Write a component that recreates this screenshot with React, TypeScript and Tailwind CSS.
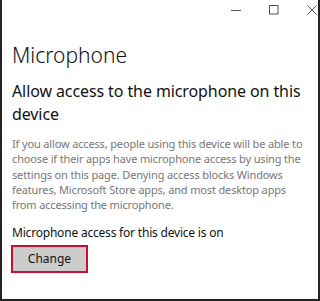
import React from "react";

const font = { fontFamily: '"Segoe UI", "Noto Sans", sans-serif' };

const TitleBar = () => (
  <div className="flex h-[22px] items-start justify-end gap-[28px] pr-[1px] pt-[5px]">
    {/* minimize */}
    <svg width="10" height="10" viewBox="0 0 10 10">
      <path d="M0 5.5h10" stroke="#555" strokeWidth="1" />
    </svg>
    {/* maximize */}
    <svg width="10" height="10" viewBox="0 0 10 10">
      <rect x="0.5" y="0.5" width="8.5" height="8.5" fill="none" stroke="#555" strokeWidth="1" />
    </svg>
    {/* close */}
    <svg width="10" height="10" viewBox="0 0 10 10">
      <path d="M0.5 0.5l9 9M9.5 0.5l-9 9" stroke="#555" strokeWidth="1" />
    </svg>
  </div>
);

export default function App() {
  return (
    <div
      className="flex h-[301px] w-[320px] flex-col overflow-hidden border-x-2 border-b-2 border-[#222] bg-white"
      style={font}
    >
      <TitleBar />
      <div className="flex flex-col px-[10px]">
        <h1 className="mt-[19px] text-[21px] font-light leading-[28px] text-[#111]">Microphone</h1>
        <h2 className="mt-[11px] text-[16px] leading-[23px] tracking-[-0.1px] text-[#111]">
          Allow access to the microphone on this device
        </h2>
        <p className="mt-[10px] text-[11px] leading-[15.3px] tracking-[-0.15px] text-[#777]">
          If you allow access, people using this device will be able to choose if their apps have
          microphone access by using the settings on this page. Denying access blocks Windows
          features, Microsoft Store apps, and most desktop apps from accessing the microphone.
        </p>
        <p className="mt-[13px] text-[12px] leading-[16px] tracking-[-0.2px] text-[#111]">
          Microphone access for this device is on
        </p>
        <div className="mt-[4px] flex">
          <button className="-ml-[1px] flex h-[28px] w-[77px] items-center justify-center border-2 border-[#c8102e] bg-[#cccccc] text-[12px] text-[#111]">
            Change
          </button>
        </div>
      </div>
    </div>
  );
}
